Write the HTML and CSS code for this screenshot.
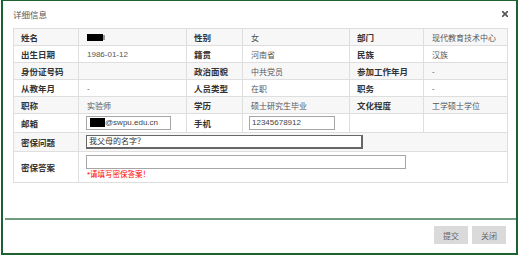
FILE: index.html
```html
<!DOCTYPE html>
<html lang="zh-CN">
<head>
<meta charset="utf-8">
<title>详细信息</title>
<link rel="stylesheet" href="styles.css">
</head>
<body>
<div class="dialog">
  <div class="titlebar">
    <span class="title">详细信息</span>
    <span class="close" aria-label="关闭">
      <svg width="6" height="6" viewBox="0 0 6 6"><path d="M0.6 0.6 L5.4 5.4 M5.4 0.6 L0.6 5.4" stroke="#555" stroke-width="1.6" stroke-linecap="round"/></svg>
    </span>
  </div>
  <div class="body">
    <table class="info">
      <colgroup>
        <col class="c1"><col class="c2"><col class="c3"><col class="c4"><col class="c5"><col class="c6">
      </colgroup>
      <tr class="row odd">
        <th>姓名</th><td><span class="redact"></span><span class="redact-tail"></span></td>
        <th>性别</th><td>女</td>
        <th>部门</th><td>现代教育技术中心</td>
      </tr>
      <tr class="row">
        <th>出生日期</th><td>1986-01-12</td>
        <th>籍贯</th><td>河南省</td>
        <th>民族</th><td>汉族</td>
      </tr>
      <tr class="row odd">
        <th>身份证号码</th><td></td>
        <th>政治面貌</th><td>中共党员</td>
        <th>参加工作年月</th><td>-</td>
      </tr>
      <tr class="row">
        <th>从教年月</th><td>-</td>
        <th>人员类型</th><td>在职</td>
        <th>职务</th><td>-</td>
      </tr>
      <tr class="row odd">
        <th>职称</th><td>实验师</td>
        <th>学历</th><td>硕士研究生毕业</td>
        <th>文化程度</th><td>工学硕士学位</td>
      </tr>
      <tr class="row tall">
        <th>邮箱</th><td><div class="field email"><span class="redact small"></span>@swpu.edu.cn</div></td>
        <th>手机</th><td><div class="field phone">12345678912</div></td>
        <td></td><td></td>
      </tr>
      <tr class="row tall odd">
        <th>密保问题</th><td colspan="5"><div class="field question">我父母的名字？</div></td>
      </tr>
      <tr class="row answer">
        <th>密保答案</th><td colspan="5"><div class="field answer-box"></div><div class="warn">*请填写密保答案！</div></td>
      </tr>
    </table>
  </div>
  <div class="footer">
    <button class="btn">提交</button>
    <button class="btn">关闭</button>
  </div>
</div>
</body>
</html>
```
FILE: styles.css
```css
html, body {
  margin: 0;
  padding: 0;
  background: #fff;
}
body {
  font-family: "Liberation Sans", "Noto Sans CJK SC", sans-serif;
  color: #444;
}
.dialog {
  margin-left: 1px;
  width: 513px;
  height: 252px;
  border: 2px solid #1d6230;
  border-top-width: 1px;
  display: flex;
  flex-direction: column;
  background: #fff;
}
.titlebar {
  height: 27px;
  display: flex;
  align-items: center;
  justify-content: space-between;
  padding: 0 8px 2px 10px;
  box-sizing: border-box;
}
.title {
  font-size: 8.5px;
  color: #555;
}
.close {
  display: flex;
  margin-top: 0;
}
.body {
  flex: 1;
  padding-left: 10px;
}
.info {
  border-collapse: collapse;
  table-layout: fixed;
  width: 495px;
  font-size: 8px;
}
.c1 { width: 65px; }
.c2 { width: 108px; }
.c3 { width: 56px; }
.c4 { width: 107px; }
.c5 { width: 74px; }
.c6 { width: 84px; }
.info th, .info td {
  border: 1px solid #dedede;
  padding: 0 0 0 7px;
  text-align: left;
  vertical-align: middle;
  white-space: nowrap;
  overflow: hidden;
}
.info th {
  font-size: 8.5px;
  font-weight: bold;
  color: #333;
}
.info td {
  color: #555;
  padding-left: 8px;
}
.row { height: 17px; }
.row.odd { background: #f7f7f7; }
.row.tall { height: 19px; }
.row.answer { height: 30px; }
.redact {
  display: inline-block;
  width: 16px;
  height: 7px;
  background: #000;
  vertical-align: middle;
}
.redact-tail {
  display: inline-block;
  width: 2px;
  height: 5px;
  background: #999;
  vertical-align: middle;
}
.redact.small {
  width: 15px;
  height: 9px;
  margin-left: 1px;
}
.field {
  box-sizing: border-box;
  height: 14px;
  border: 1px solid #a6a6a6;
  background: #fff;
  font-size: 8px;
  line-height: 12px;
  color: #444;
  padding-left: 2px;
  margin-left: -1px;
}
.email { width: 85px; }
.phone { width: 86px; margin-left: -2px; }
.question {
  width: 277px;
  border: 1px solid #666;
  border-width: 1px 2px 2px 1px;
  color: #333;
}
.answer-box {
  width: 320px;
  margin-top: 3px;
}
.warn {
  color: #f00;
  font-size: 7.5px;
  line-height: 10px;
  margin-top: 1px;
  margin-bottom: 2px;
}
.footer {
  height: 35px;
  border-top: 2px solid #6f9c7c;
  display: flex;
  justify-content: flex-end;
  align-items: flex-start;
  gap: 4px;
  padding: 6px 10px 0 0;
  box-sizing: border-box;
  margin-left: 2px;
}
.btn {
  width: 34px;
  height: 18px;
  border: none;
  background: #dadada;
  color: #666;
  font-family: "Liberation Sans", "Noto Sans CJK SC", sans-serif;
  font-size: 8px;
  padding: 0;
}
```
